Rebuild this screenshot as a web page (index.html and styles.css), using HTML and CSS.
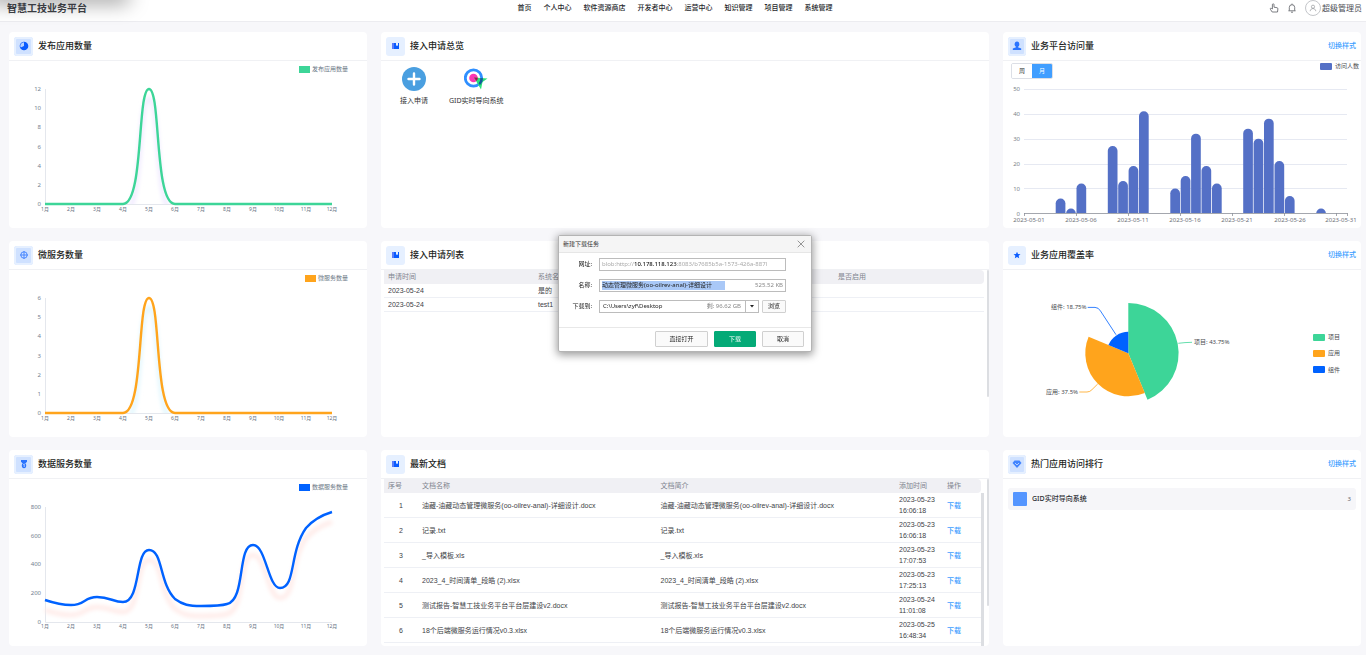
FILE: index.html
```html
<!DOCTYPE html>
<html lang="zh-CN">
<head>
<meta charset="utf-8">
<meta name="viewport" content="width=device-width, initial-scale=1">
<title>智慧工技业务平台</title>
<link rel="stylesheet" href="styles.css">
</head>
<body>
<svg class="defs" aria-hidden="true">
  <defs>
    <symbol id="i-book" viewBox="0 0 8 8"><rect x="0" y="1" width="2" height="6" fill="#5b7dfb"/><path d="M2 1h2v3l1-.8L6 4V1h1v6H2z" fill="#0a5cff"/></symbol>
    <filter id="soft" x="-10%" y="-20%" width="120%" height="150%"><feGaussianBlur stdDeviation="2"/></filter>
    <clipPath id="plot"><rect x="36" y="0" width="300" height="143"/></clipPath>
    <clipPath id="bars"><rect x="0" y="0" width="358" height="134"/></clipPath>
  </defs>
</svg>

<header class="topbar">
  <h1 class="brand">智慧工技业务平台</h1>
  <nav class="nav">
    <a href="#">首页</a><a href="#">个人中心</a><a href="#">软件资源商店</a><a href="#">开发者中心</a><a href="#">运营中心</a><a href="#">知识管理</a><a href="#">项目管理</a><a href="#">系统管理</a>
  </nav>
  <div class="user">
    <button class="icon-btn" type="button" aria-label="快捷操作"><svg viewBox="0 0 10 10" class="ic"><path d="M3.4 6V1.6a.8.8 0 0 1 1.6 0v2.6l3 .5c.7.2 1 .6.9 1.2L8.500 9H3.200L1.400 6.300c-.5-.9.4-1.400 1-.9z"/></svg></button>
    <button class="icon-btn" type="button" aria-label="通知"><svg viewBox="0 0 10 10" class="ic"><path d="M1.400 7.800h7.200M2.300 7.600V4.400a2.700 2.700 0 0 1 5.400 0v3.200M4 9.200h2M5 .6v1"/></svg></button>
    <button class="account" type="button"><span class="avatar"><svg viewBox="0 0 10 10" class="ic"><circle cx="5" cy="3.400" r="2"/><path d="M1.500 9c.2-4.400 6.800-4.400 7 0"/></svg></span>超级管理员</button>
  </div>
</header>

<main class="board">
  <section class="card">
    <div class="card-head">
      <span class="badge deep"><svg viewBox="0 0 10 10"><circle cx="5" cy="5" r="4.300" fill="#0a5cff"/><path d="M5 5V1.300A3.700 3.700 0 0 0 1.700 6.600z" fill="#b9d3ff"/></svg></span>
      <h2>发布应用数量</h2>
    </div>
    <svg class="chart" viewBox="0 0 358 167" role="img" aria-label="发布应用数量">
      <rect x="290" y="5" width="11" height="7" fill="#3dd598"/><text x="303" y="10" class="leg">发布应用数量</text>
      <path d="M36.500 28V143.500H323" class="axis"/>
      <g class="ylab"><text x="32" y="145">0</text><text x="32" y="126">2</text><text x="32" y="107">4</text><text x="32" y="88">6</text><text x="32" y="68">8</text><text x="32" y="49">10</text><text x="32" y="30">12</text></g>
      <g class="xlab"><text x="36" y="150">1月</text><text x="62" y="150">2月</text><text x="88" y="150">3月</text><text x="114" y="150">4月</text><text x="140" y="150">5月</text><text x="166" y="150">6月</text><text x="192" y="150">7月</text><text x="218" y="150">8月</text><text x="244" y="150">9月</text><text x="270" y="150">10月</text><text x="297" y="150">11月</text><text x="323" y="150">12月</text></g>
      <g clip-path="url(#plot)"><path d="M36 153H114C135 153 128 38 140 38S145 153 166 153H323" class="line glow violet"/></g>
      <path d="M36 143H114C135 143 128 28 140 28S145 143 166 143H323" class="line green"/>
    </svg>
  </section>

  <section class="card">
    <div class="card-head">
      <span class="badge"><svg><use href="#i-book"/></svg></span>
      <h2>接入申请总览</h2>
    </div>
    <div class="apps">
      <a class="app" href="#"><svg viewBox="0 0 24 24"><circle cx="12" cy="12" r="12" fill="#4a9fe0"/><path d="M12 6.500v11M6.500 12h11" stroke="#fff" stroke-width="2.400" stroke-linecap="round"/></svg>接入申请</a>
      <a class="app" href="#"><svg viewBox="0 0 24 24"><circle cx="9.500" cy="11" r="8.200" fill="#fff" stroke="#2f8fff" stroke-width="2.800"/><circle cx="9.500" cy="11" r="4.300" fill="#fb36b4"/><path d="M10 10.500 23.500 11.500 18.500 15 17 22.500z" fill="#2be37c"/><path d="M16.300 11 19.100 11.200A9.600 9.600 0 0 1 16 18.200L14.500 16.200A6.800 6.800 0 0 0 16.300 11z" fill="#145a9c"/><path d="M10 10.500l3.800.3a4.300 4.300 0 0 1-1.300 3.300z" fill="#a80f52"/></svg>GID实时导向系统</a>
    </div>
  </section>

  <section class="card">
    <div class="card-head">
      <span class="badge deep narrow"><svg viewBox="0 0 10 10" fill="#2a74ff"><ellipse cx="5" cy="3.300" rx="2.300" ry="2.700"/><path d="M4 5h2v1.300l3.200 1.200V9H.8V7.500L4 6.300z"/></svg></span>
      <h2>业务平台访问量</h2>
      <a class="switch" href="#">切换样式</a>
    </div>
    <div class="tools">
      <div class="toggle"><button type="button">周</button><button type="button" class="on">月</button></div>
      <span class="legend"><i></i>访问人数</span>
    </div>
    <svg class="chart" viewBox="0 0 358 149" role="img" aria-label="业务平台访问量">
      <path d="M21 10.500H344M21 35.500H344M21 60.500H344M21 85.500H344M21 109.500H344" stroke="#e6e9f2"/>
      <g class="ylab grey"><text x="17" y="137">0</text><text x="17" y="112">10</text><text x="17" y="87">20</text><text x="17" y="62">30</text><text x="17" y="37">40</text><text x="17" y="12">50</text></g>
      <g clip-path="url(#bars)" fill="#5470c6">
        <rect x="52.700" y="119.500" width="9.700" height="30" rx="4.800"/><rect x="63.100" y="129.500" width="9.700" height="20" rx="4.800"/><rect x="73.500" y="104.500" width="9.700" height="50" rx="4.800"/>
        <rect x="104.800" y="67" width="9.700" height="90" rx="4.800"/><rect x="115.200" y="102" width="9.700" height="50" rx="4.800"/><rect x="125.600" y="87" width="9.700" height="60" rx="4.800"/><rect x="136" y="32.300" width="9.700" height="120" rx="4.800"/>
        <rect x="167.300" y="109.500" width="9.700" height="40" rx="4.800"/><rect x="177.700" y="97" width="9.700" height="60" rx="4.800"/><rect x="188.100" y="54.700" width="9.700" height="100" rx="4.800"/><rect x="198.500" y="87" width="9.700" height="60" rx="4.800"/><rect x="209" y="104.500" width="9.700" height="50" rx="4.800"/>
        <rect x="240.200" y="49.700" width="9.700" height="100" rx="4.800"/><rect x="250.600" y="59.700" width="9.700" height="90" rx="4.800"/><rect x="261" y="39.700" width="9.700" height="110" rx="4.800"/><rect x="271.500" y="82" width="9.700" height="70" rx="4.800"/><rect x="281.900" y="117" width="9.700" height="40" rx="4.800"/><rect x="313.200" y="129.500" width="9.700" height="20" rx="4.800"/>
      </g>
      <path d="M21 134.500H344.500M21.500 134v3M73.500 134v3M125.500 134v3M177.500 134v3M229.500 134v3M281.500 134v3M333.500 134v3M344.500 134v3" stroke="#8d9199" fill="none" stroke-width=".8"/>
      <g class="dlab"><text x="26" y="143">2023-05-01</text><text x="78" y="143">2023-05-06</text><text x="130" y="143">2023-05-11</text><text x="182" y="143">2023-05-16</text><text x="234" y="143">2023-05-21</text><text x="287" y="143">2023-05-26</text><text x="338" y="143">2023-05-31</text></g>
    </svg>
  </section>

  <section class="card">
    <div class="card-head">
      <span class="badge deep"><svg viewBox="0 0 10 10" fill="none" stroke="#3d80ff" stroke-width=".9"><circle cx="5" cy="5" r="3.200"/><path d="M5 1v8M1 5h8"/></svg></span>
      <h2>微服务数量</h2>
    </div>
    <svg class="chart" viewBox="0 0 358 167" role="img" aria-label="微服务数量">
      <rect x="296" y="5" width="11" height="7" fill="#ffa41c"/><text x="309" y="10" class="leg">微服务数量</text>
      <path d="M36.500 28V143.500H323" class="axis"/>
      <g class="ylab"><text x="32" y="145">0</text><text x="32" y="126">1</text><text x="32" y="107">2</text><text x="32" y="88">3</text><text x="32" y="68">4</text><text x="32" y="49">5</text><text x="32" y="30">6</text></g>
      <g class="xlab"><text x="36" y="150">1月</text><text x="62" y="150">2月</text><text x="88" y="150">3月</text><text x="114" y="150">4月</text><text x="140" y="150">5月</text><text x="166" y="150">6月</text><text x="192" y="150">7月</text><text x="218" y="150">8月</text><text x="244" y="150">9月</text><text x="270" y="150">10月</text><text x="297" y="150">11月</text><text x="323" y="150">12月</text></g>
      <g clip-path="url(#plot)"><path d="M36 153H114C135 153 128 38 140 38S145 153 166 153H323" class="line glow cyan"/></g>
      <path d="M36 143H114C135 143 128 28 140 28S145 143 166 143H323" class="line orange"/>
    </svg>
  </section>

  <section class="card">
    <div class="card-head">
      <span class="badge"><svg><use href="#i-book"/></svg></span>
      <h2>接入申请列表</h2>
    </div>
    <div class="scroll">
      <div class="scroll-body">
        <table class="grid requests">
          <colgroup><col class="c25"><col class="c50"><col class="c25"></colgroup>
          <thead><tr><th>申请时间</th><th>系统名称</th><th>是否启用</th></tr></thead>
          <tbody>
            <tr><td>2023-05-24</td><td>是的</td><td></td></tr>
            <tr><td>2023-05-24</td><td>test1</td><td></td></tr>
          </tbody>
        </table>
      </div>
      <span class="thumb"></span>
    </div>
  </section>

  <section class="card">
    <div class="card-head">
      <span class="badge narrow"><svg viewBox="0 0 10 10"><path d="M5 1.700 6 4l2.500.2-1.900 1.600.6 2.500L5 7 2.800 8.300l.6-2.500-1.900-1.600L4 4z" fill="#0a5cff"/></svg></span>
      <h2>业务应用覆盖率</h2>
      <a class="switch" href="#">切换样式</a>
    </div>
    <svg class="chart" viewBox="0 0 358 167" role="img" aria-label="业务应用覆盖率">
      <path d="M125.300 83.300V33a50.300 50.300 0 0 1 19.200 96.800z" fill="#3dd598"/>
      <path d="M125.300 83.300 141.800 123A43 43 0 0 1 85.600 66.800z" fill="#ffa41c"/>
      <path d="M125.300 83.300 105.400 75.100A21.500 21.500 0 0 1 125.300 61.800z" fill="#0062ff"/>
      <g fill="none" stroke-width=".8"><path d="M175.300 73.300 182 72.600 189 72.300" stroke="#3dd598"/><path d="M94.700 114 89 119.600Q87 122 84 122H76.300" stroke="#ffa41c"/><path d="M113 64.700 97.500 41Q95.500 37.400 92 37.400H84.700" stroke="#0062ff"/></g>
      <g class="pie-lab"><text x="191" y="74">项目: 43.75%</text><text x="43" y="124">应用: 37.5%</text><text x="48" y="39">组件: 18.75%</text></g>
      <rect x="310" y="64" width="12" height="7" rx="1" fill="#3dd598"/><rect x="310" y="80" width="12" height="7" rx="1" fill="#ffa41c"/><rect x="310" y="96" width="12" height="7" rx="1" fill="#0062ff"/>
      <g class="pie-lab"><text x="325" y="69">项目</text><text x="325" y="85">应用</text><text x="325" y="102">组件</text></g>
    </svg>
  </section>

  <section class="card">
    <div class="card-head">
      <span class="badge deep"><svg viewBox="0 0 10 10" fill="#2a74ff"><path d="M2 1h6v1.300L6.800 4.300H3.200L2 2.300z"/><ellipse cx="5" cy="6.600" rx="2.200" ry="2.700"/><path d="M4.400 5.600 5.200 5v3" stroke="#cfe1ff" stroke-width=".8" fill="none"/></svg></span>
      <h2>数据服务数量</h2>
    </div>
    <svg class="chart" viewBox="0 0 358 167" role="img" aria-label="数据服务数量">
      <rect x="290" y="5" width="11" height="7" fill="#0062ff"/><text x="303" y="10" class="leg">数据服务数量</text>
      <path d="M36.500 28V143.500H323" class="axis"/>
      <g class="ylab"><text x="32" y="145">0</text><text x="32" y="116">200</text><text x="32" y="87">400</text><text x="32" y="59">600</text><text x="32" y="30">800</text></g>
      <g class="xlab"><text x="36" y="149">1月</text><text x="62" y="149">2月</text><text x="88" y="149">3月</text><text x="114" y="149">4月</text><text x="140" y="149">5月</text><text x="166" y="149">6月</text><text x="192" y="149">7月</text><text x="218" y="149">8月</text><text x="244" y="149">9月</text><text x="270" y="149">10月</text><text x="297" y="149">11月</text><text x="323" y="149">12月</text></g>
      <path d="M36 131C45 134 54 136 62 136C76 136 75 128 88 128C101 128 104 133 114 133C132 133 126 81 140 81C154 81 150 114 166 130C174 136 180 137 192 137C205 137 212 137 218 135C237 131 228 76 244 76C257 76 259 119 271 119C287 119 280 83 297 59C305 50 313 46 323 43" class="line glow pink"/>
      <path d="M36 121C45 124 54 126 62 126C76 126 75 118 88 118C101 118 104 123 114 123C132 123 126 71 140 71C154 71 150 104 166 120C174 126 180 127 192 127C205 127 212 127 218 125C237 121 228 66 244 66C257 66 259 109 271 109C287 109 280 73 297 49C305 40 313 36 323 33" class="line blue"/>
    </svg>
  </section>

  <section class="card">
    <div class="card-head">
      <span class="badge"><svg><use href="#i-book"/></svg></span>
      <h2>最新文档</h2>
    </div>
    <div class="scroll">
      <div class="scroll-body inner">
        <table class="grid docs">
          <colgroup><col class="c-no"><col><col><col class="c-time"><col class="c-op"></colgroup>
          <thead><tr><th>序号</th><th>文档名称</th><th>文档简介</th><th>添加时间</th><th>操作</th></tr></thead>
          <tbody>
            <tr><td>1</td><td>油藏-油藏动态管理微服务(oo-oilrev-anal)-详细设计.docx</td><td>油藏-油藏动态管理微服务(oo-oilrev-anal)-详细设计.docx</td><td>2023-05-23 16:06:18</td><td><a href="#">下载</a></td></tr>
            <tr><td>2</td><td>记录.txt</td><td>记录.txt</td><td>2023-05-23 16:06:18</td><td><a href="#">下载</a></td></tr>
            <tr><td>3</td><td>_导入模板.xls</td><td>_导入模板.xls</td><td>2023-05-23 17:07:53</td><td><a href="#">下载</a></td></tr>
            <tr><td>4</td><td>2023_4_时间清单_段皓 (2).xlsx</td><td>2023_4_时间清单_段皓 (2).xlsx</td><td>2023-05-23 17:25:13</td><td><a href="#">下载</a></td></tr>
            <tr><td>5</td><td>测试报告-智慧工技业务平台平台层建设v2.docx</td><td>测试报告-智慧工技业务平台平台层建设v2.docx</td><td>2023-05-24 11:01:08</td><td><a href="#">下载</a></td></tr>
            <tr><td>6</td><td>18个后端微服务运行情况v0.3.xlsx</td><td>18个后端微服务运行情况v0.3.xlsx</td><td>2023-05-25 16:48:34</td><td><a href="#">下载</a></td></tr>
          </tbody>
        </table>
        <span class="inner-thumb"></span>
      </div>
      <span class="thumb"></span>
    </div>
  </section>

  <section class="card">
    <div class="card-head">
      <span class="badge deep narrow"><svg viewBox="0 0 10 10"><path d="M2.500 1.500h5L9.500 4 5 9 .5 4z" fill="#4285ff"/><path d="M3 4l2 2 2-2" fill="none" stroke="#cfe1ff" stroke-width=".8"/></svg></span>
      <h2>热门应用访问排行</h2>
      <a class="switch" href="#">切换样式</a>
    </div>
    <ol class="rank"><li><i></i><b>GID实时导向系统</b><span>3</span></li></ol>
  </section>
</main>

<div class="layer">
  <form class="dialog" role="dialog" aria-labelledby="dlg-title">
    <div class="dlg-head"><h2 id="dlg-title">新建下载任务</h2><button type="button" aria-label="关闭"><svg viewBox="0 0 8 8"><path d="M.7.7l6.600 6.600M7.300.7.7 7.300" stroke="#8a8a8a" stroke-width=".9"/></svg></button></div>
    <div class="dlg-body">
      <span class="lab" id="url-lab">网址:</span>
      <div class="field url" role="textbox" tabindex="0" aria-labelledby="url-lab">blob:http://<b>10.178.118.123</b>:8083/b7685b5a-1573-426a-887l</div>
      <label class="lab" for="fname">名称:</label>
      <div class="field"><input id="fname" value="动态管理微服务(oo-oilrev-anal)-详细设计"><span class="note">525.52 KB</span></div>
      <label class="lab" for="fpath">下载到:</label>
      <div class="path-row">
        <div class="field combo"><select id="fpath"><option>C:\Users\zyf\Desktop</option></select><span class="note">剩: 96.62 GB</span><span class="arrow"><svg viewBox="0 0 4 3"><path d="M0 0h4L2 2.500z" fill="#222"/></svg></span></div>
        <button class="btn small" type="button">浏览</button>
      </div>
    </div>
    <div class="dlg-foot">
      <button class="btn wide" type="button">直接打开</button>
      <button class="btn primary" type="submit">下载</button>
      <button class="btn" type="button">取消</button>
    </div>
  </form>
</div>
</body>
</html>
```

FILE: styles.css
```css
* { box-sizing: border-box; }
body {
  margin: 0;
  min-height: 100vh;
  display: flex;
  flex-direction: column;
  background: #f7f7fa;
  color: #303133;
  font: 7px/10px "Noto Sans", "Noto Sans CJK SC", sans-serif;
}
h1, h2, ol { margin: 0; padding: 0; }
button, input, select { font: inherit; color: inherit; margin: 0; padding: 0; border: 0; background: none; }
button { cursor: pointer; }
a { color: inherit; text-decoration: none; }
svg { display: block; }
.defs { position: absolute; width: 0; height: 0; }

/* top bar */
.topbar {
  position: relative;
  display: grid;
  grid-template-columns: 1fr auto 1fr;
  align-items: center;
  height: 22px;
  padding: 0 4px 5px 7px;
  background: #fff;
  border-bottom: 1px solid #ececf0;
}
.topbar::before {
  content: "";
  position: absolute;
  top: -12px;
  left: -10px;
  width: 136px;
  height: 10px;
  box-shadow: 0 2px 20px 3px rgba(0, 0, 0, .4);
}
.brand { position: relative; font-size: 10px; line-height: 16px; font-weight: 700; color: #3a3c42; }
.nav { display: flex; gap: 12px; margin-right: 19px; font-weight: 500; color: #26282c; }
.user { display: flex; justify-content: flex-end; align-items: center; gap: 8px; }
.ic { width: 10px; height: 10px; fill: none; stroke: #5a5d63; stroke-width: .8; stroke-linejoin: round; }
.account { display: flex; align-items: center; gap: 1px; font-size: 8px; line-height: 16px; color: #4a4c52; }
.avatar { display: grid; place-items: center; width: 16px; height: 16px; border: 1px solid #c4c6ca; border-radius: 50%; }
.avatar .ic { width: 8px; height: 8px; stroke: #8a8d93; }

/* board */
.board {
  flex: 1;
  display: grid;
  grid-template-columns: 358fr 608fr 358fr;
  grid-template-rows: repeat(3, minmax(196px, 1fr));
  gap: 13px 14px;
  padding: 10px 5px 9px 9px;
}
.card { display: flex; flex-direction: column; min-width: 0; min-height: 0; overflow: hidden; background: #fff; border-radius: 4px; }
.card-head { flex: none; display: flex; align-items: center; gap: 5px; height: 29px; padding: 0 5px; border-bottom: 1px solid #f0f1f4; }
.card-head h2 { font-size: 9px; line-height: 14px; font-weight: 500; color: #1c1e22; }
.badge { display: grid; place-items: center; width: 19px; height: 19px; border-radius: 3px; background: #e6f0ff; }
.badge.narrow { width: 18px; }
.badge.deep { box-shadow: inset 0 0 0 2px #e6f0ff; background: #cfe1ff; }
.badge svg { width: 10px; height: 10px; }
.badge svg:has(use) { width: 8px; height: 8px; }
.switch { margin-left: auto; font-weight: 500; color: #409eff; }

/* charts */
.chart { flex: 1; min-height: 0; width: 100%; font-size: 6px; }
.axis { fill: none; stroke: #e4e7ed; }
.leg { fill: #6b7785; }
.ylab { text-anchor: end; fill: #74808f; }
.ylab.grey { fill: #7d828a; }
.xlab { text-anchor: middle; font-size: 5px; fill: #66717f; }
.dlab { text-anchor: middle; fill: #6e7079; }
.pie-lab { fill: #4a4c50; }
.line { fill: none; stroke-width: 2.4; stroke-linejoin: round; }
.green { stroke: #3dd598; }
.orange { stroke: #ffa41c; }
.blue { stroke: #0062ff; }
.glow { stroke-width: 4; filter: url(#soft); }
.violet { stroke: #efe9ff; }
.cyan { stroke: #dff6fd; }
.pink { stroke: #ffe9e6; }

.tools { display: flex; justify-content: space-between; align-items: flex-start; height: 18px; padding: 2px 2px 0 8px; }
.toggle { display: flex; border: 1px solid #dcdfe6; border-radius: 2px; overflow: hidden; font-size: 6px; }
.toggle button { width: 20px; height: 14px; background: #fff; }
.toggle .on { background: #409eff; color: #fff; }
.legend { display: flex; align-items: center; gap: 3px; font-size: 6px; line-height: 7px; color: #4a4c50; }
.legend i { width: 12px; height: 7px; border-radius: 1px; background: #5470c6; }

/* applications */
.apps { display: flex; gap: 21px; padding: 6px 19px; }
.app { display: flex; flex-direction: column; align-items: center; gap: 5px; }
.app svg { width: 24px; height: 24px; }

/* tables */
.scroll { flex: 1; min-height: 0; display: flex; justify-content: space-between; padding-left: 3px; }
.scroll-body { flex: 1; min-width: 0; margin-right: 3px; overflow: hidden; }
.thumb { flex: none; width: 2px; height: 127px; background: #dcdee2; border-radius: 1px; }
.inner { display: flex; }
.inner-thumb { flex: none; width: 3px; margin-top: 14px; background: #dcdee2; }
.grid { width: 100%; table-layout: fixed; border-collapse: separate; border-spacing: 0; font-family: "Liberation Sans", "Noto Sans CJK SC", sans-serif; }
.grid th, .grid td { padding: 0 4px; text-align: left; vertical-align: middle; }
.grid th { height: 14px; background: #f0f0f4; color: #7f848e; font-weight: 400; }
.grid th:last-child { border-radius: 0 4px 4px 0; }
.grid td { border-bottom: 1px solid #eef0f5; color: #404246; }
.requests td { height: 14px; }
.docs { align-self: flex-start; }
.docs td { height: 25px; line-height: 11px; }
.docs td:first-child { text-align: center; }
.docs td a { color: #409eff; font-weight: 500; }
.c25 { width: 25%; }
.c50 { width: 50%; }
.c-no { width: 34px; }
.c-time { width: 48px; }
.c-op { width: 38px; }

/* ranking */
.rank { list-style: none; padding: 9px 5px; }
.rank li { display: flex; align-items: center; gap: 5px; height: 22px; padding: 0 5px; border-radius: 3px; background: #f6f6f9; }
.rank i { width: 14px; height: 14px; border-radius: 1px; background: #5596ff; }
.rank b { flex: 1; font-weight: 500; color: #2c2e33; }
.rank span { font-size: 6px; color: #5c5f66; }

/* download dialog */
.layer { position: fixed; inset: 0; display: grid; place-items: center; padding: 0 0 68px 4px; pointer-events: none; }
.dialog { width: 254px; background: #fff; border: 1px solid #b4b4b4; border-radius: 2px; box-shadow: 0 2px 8px 1px rgba(0, 0, 0, .4); font-size: 6px; line-height: 9px; color: #222; pointer-events: auto; }
.dlg-head { display: flex; align-items: center; justify-content: space-between; height: 17px; padding: 0 6px 0 4px; background: #f5f5f5; border-bottom: 1px solid #e6e6e6; }
.dlg-head h2 { font-size: 6px; font-weight: 400; color: #333; }
.dlg-head svg { width: 8px; height: 8px; }
.dlg-body { display: grid; grid-template-columns: 32px 1fr; gap: 8px 7px; align-items: center; padding: 5px 25px 14px 1px; }
.lab { text-align: right; }
.field { display: flex; align-items: center; justify-content: space-between; height: 13px; min-width: 0; padding: 0 2px; border: 1px solid #bcbcbc; background: #fff; overflow: hidden; white-space: nowrap; }
.url { display: block; line-height: 11px; color: #aaa; }
.url b { font-weight: 500; color: #222; }
.field input { width: 123px; height: 9px; background: #a9c8f7; }
.note { color: #888; }
.path-row { display: flex; gap: 3px; }
.combo { flex: 1; padding-right: 0; }
.combo select { flex: 1; min-width: 0; appearance: none; padding-left: 1px; }
.arrow { display: grid; place-items: center; width: 13px; height: 11px; margin-left: 4px; border-left: 1px solid #bcbcbc; }
.arrow svg { width: 4px; height: 3px; }
.dlg-foot { display: flex; justify-content: flex-end; gap: 6px; padding: 3px 7px 4px; border-top: 1px solid #e8e8e8; }
.btn { width: 42px; height: 16px; border: 1px solid #d0d0d0; border-radius: 1px; background: #fafafa; text-align: center; }
.btn.wide { width: 53px; }
.btn.small { width: 24px; height: 13px; }
.btn.primary { background: #04aa77; border-color: #04aa77; color: #fff; }
```
